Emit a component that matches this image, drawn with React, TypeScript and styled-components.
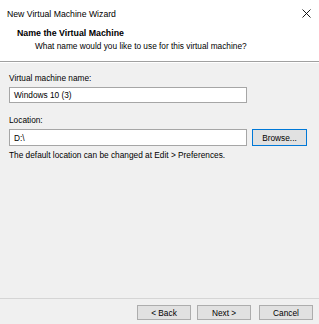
import React from 'react'
import styled, { createGlobalStyle } from 'styled-components'

const GlobalStyle = createGlobalStyle`
  html, body {
    margin: 0;
    padding: 0;
    background: #f0f0f0;
  }
  body {
    font-family: "Liberation Sans", Arial, sans-serif;
    font-size: 8.3px;
    color: #000000;
  }
`

const WindowStyled = styled.div`
  width: 319px;
  height: 324px;
  display: flex;
  flex-direction: column;
  background: #f0f0f0;
  overflow: hidden;
`
const TitleBar = styled.div`
  height: 28px;
  display: flex;
  align-items: center;
  justify-content: space-between;
  padding: 0 7px 1px 7px;
  box-sizing: border-box;
  background: #ffffff;
`
const TitleText = styled.span`
  font-size: 8.7px;
  line-height: 10px;
`
const CloseButton = styled.button`
  width: 12px;
  height: 12px;
  padding: 0;
  border: none;
  background: transparent;
  display: flex;
  align-items: center;
  justify-content: center;
`
const HeaderStyled = styled.div`
  height: 34px;
  background: #ffffff;
  padding: 0 0 0 17px;
  box-sizing: border-box;
  border-bottom: 1px solid #a0a0a0;
`
const HeaderTitle = styled.h2`
  margin: 0;
  font-size: 8.8px;
  font-weight: bold;
  line-height: 11px;
`
const HeaderSub = styled.p`
  margin: 2px 0 0 18px;
  line-height: 10px;
`
const Etch = styled.div`
  height: 1px;
  background: #ffffff;
`
const Body = styled.div`
  flex: 1;
  display: flex;
  flex-direction: column;
  padding: 10px 12px 0 9px;
`
const Label = styled.label<{ $top: number }>`
  display: block;
  line-height: 10px;
  margin-top: ${props => props.$top}px;
  margin-bottom: 4px;
`
const Row = styled.div`
  display: flex;
  gap: 5px;
`
const TextBox = styled.div<{ $h: number }>`
  width: 238px;
  height: ${props => props.$h}px;
  box-sizing: border-box;
  border: 1px solid #a6a6a6;
  background: #ffffff;
  padding: 0 4px;
  display: flex;
  align-items: center;
  line-height: 10px;
`
const Button = styled.button<{ $focus?: boolean }>`
  height: ${props => props.$focus ? 17 : 15}px;
  width: ${props => props.$focus ? 55 : 54}px;
  box-sizing: border-box;
  padding: 0;
  font-family: "Liberation Sans", Arial, sans-serif;
  font-size: 8.3px;
  color: #000000;
  background: #e1e1e1;
  border: 1px solid ${props => props.$focus ? '#0078d7' : '#adadad'};
  line-height: 10px;
`
const Helper = styled.p`
  margin: 4px 0 0 0;
  line-height: 10px;
`
const Footer = styled.div`
  border-top: 1px solid #d5d5d5;
  height: 26px;
  box-sizing: border-box;
  display: flex;
  justify-content: flex-end;
  align-items: flex-start;
  padding: 6px 6px 0 0;
`
const FooterButtons = styled.div`
  display: flex;
  gap: 6px;
  & > button:last-child {
    margin-left: 2px;
  }
`

const App: React.FC = () => {
  return (
    <WindowStyled>
      <GlobalStyle />
      <TitleBar>
        <TitleText>New Virtual Machine Wizard</TitleText>
        <CloseButton aria-label="Close">
          <svg width="9" height="9" viewBox="0 0 9 9">
            <path d="M0.5 0.5 L8.5 8.5 M8.5 0.5 L0.5 8.5" stroke="#000" strokeWidth="0.9" />
          </svg>
        </CloseButton>
      </TitleBar>
      <HeaderStyled>
        <HeaderTitle>Name the Virtual Machine</HeaderTitle>
        <HeaderSub>What name would you like to use for this virtual machine?</HeaderSub>
      </HeaderStyled>
      <Etch />
      <Body>
        <Label $top={0}>Virtual machine name:</Label>
        <TextBox $h={16}>Windows 10 (3)</TextBox>
        <Label $top={12}>Location:</Label>
        <Row>
          <TextBox $h={17}>D:\</TextBox>
          <Button $focus>Browse...</Button>
        </Row>
        <Helper>The default location can be changed at Edit &gt; Preferences.</Helper>
      </Body>
      <Footer>
        <FooterButtons>
          <Button>&lt; Back</Button>
          <Button>Next &gt;</Button>
          <Button>Cancel</Button>
        </FooterButtons>
      </Footer>
    </WindowStyled>
  )
}

export default App
